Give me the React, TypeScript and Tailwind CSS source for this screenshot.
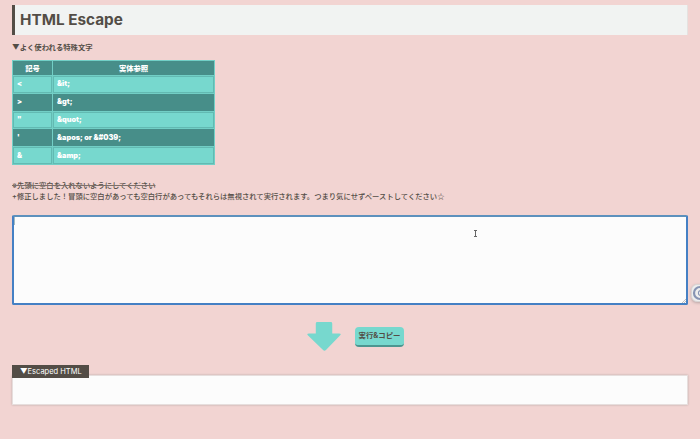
const rows = [
  { mark: '<', entity: '&it;' },
  { mark: '>', entity: '&gt;' },
  { mark: '"', entity: '&quot;' },
  { mark: "'", entity: '&apos; or &#039;' },
  { mark: '&', entity: '&amp;' },
];

function EntityTable() {
  return (
    <div className="mt-[7px] flex h-[105px] w-[203px] flex-col gap-px border border-[#72cfc6] bg-[#72cfc6] text-[7.3px] font-black text-white">
      <div className="flex h-[14px] gap-px leading-[15px]">
        <div className="w-[39px] bg-[#478e89] text-center">記号</div>
        <div className="flex-1 bg-[#478e89] text-center">実体参照</div>
      </div>
      {rows.map((row, i) => {
        const cell =
          i % 2
            ? 'bg-[#478e89] border border-[#478e89]'
            : 'bg-[#77d8ce] border border-[#62bab2]';
        return (
          <div key={row.mark} className="flex flex-1 gap-px">
            <div className={`flex w-[39px] items-center pl-[3px] pt-px ${cell}`}>{row.mark}</div>
            <div className={`flex flex-1 items-center pl-[3px] pt-px ${cell}`}>
              <span className="inline-block origin-left">{row.entity}</span>
            </div>
          </div>
        );
      })}
    </div>
  );
}

export default function App() {
  return (
    <main className="relative h-[439px] w-[700px] overflow-hidden bg-[#f2d4d2] px-3 pt-[5px] font-['Inter','Noto_Sans_CJK_JP',sans-serif] text-[#534d46]">
      <h1 className="flex h-[30px] items-center border-l-[3px] border-r border-l-[#534d46] border-r-[#e5e2e0] bg-[#f1f3f2] pl-[5px] pt-px text-[15px] font-bold">
        <span className="inline-block origin-left scale-x-[1.02] whitespace-nowrap">HTML Escape</span>
      </h1>
      <h2 className="mt-[7px] h-[11px] text-[7.33px] font-bold leading-[11px]">▼よく使われる特殊文字</h2>
      <EntityTable />
      <div className="mt-[15px] whitespace-nowrap text-[7.32px] font-medium leading-[11px]">
        <p className="h-[11px]">
          <s className="decoration-[#7d716b]">※先頭に空白を入れないようにしてください</s>
        </p>
        <p className="h-[11px]">
          +修正しました！冒頭に空白があっても空白行があってもそれらは無視されて実行されます。つまり気にせずペーストしてください
          <span className="font-['Noto_Sans_CJK_JP',sans-serif]">☆</span>
        </p>
      </div>
      <div className="relative mt-[13px] h-[90px] w-[676px] rounded-[2px] border-2 border-[#4580c4] border-t-[#5d91bd] bg-[#fcfcfc]">
        <span className="absolute left-0 top-0 h-[8px] w-px bg-[#a1b9c1]" />
        <svg className="absolute bottom-0 right-0 h-[4px] w-[4px]" viewBox="0 0 4 4" stroke="#969696" strokeWidth=".6">
          <path d="M0 4 4 0M2 4 4 2" />
        </svg>
        <svg className="absolute left-[458.5px] top-[13px] h-[8px] w-[5px]" viewBox="0 0 5 8" fill="none" stroke="#666">
          <path d="M1 .5h3M2.5 0v7M1 6.5h3" />
        </svg>
      </div>
      <div className="mt-[17px] flex h-[31px] items-start pl-[295px]">
        <svg className="h-[30px] w-[35px]" viewBox="0 0 36 31" fill="#77d8ce">
          <path d="M10.5 0h14q1.5 0 1.5 1.5V12h7q3 0 1 2L19.5 29q-1.5 1.5-3 0L1 14q-2-2 1-2h7V1.5Q9 0 10.5 0Z" />
        </svg>
        <button className="ml-[13px] mt-[5px] h-[20px] w-[49px] whitespace-nowrap rounded-[4px] border-b-2 border-[#4c9690] bg-[#77d8ce] text-center text-[7.4px] font-bold leading-[18px]">
          実行&amp;コピー
        </button>
      </div>
      <section className="mt-[12px]">
        <h3 className="relative z-10 flex h-[13px] w-[77px] items-center whitespace-nowrap bg-[#534d46] pl-[8px] text-[7.5px] font-normal text-white">
          ▼Escaped HTML
        </h3>
        <div className="-mt-[3px] h-[30px] w-[676px] border border-[#e6dedd] bg-[#fcfcfc] shadow-[0_0_2px_#b9a9a7]" />
      </section>
      <div className="absolute left-[691px] top-[284px] h-[18px] w-[18px] rounded-[6px] border border-[#d8d5d5] bg-[#eeeeee] shadow-[0_1px_3px_#b7a5a5]">
        <svg className="h-[16px] w-[16px]" viewBox="0 0 16 16" fill="none" stroke="#8794b3">
          <circle cx="8" cy="8" r="6" strokeWidth="2.2" />
          <circle cx="9" cy="8" r="2.6" strokeWidth="1.2" />
        </svg>
      </div>
    </main>
  );
}
